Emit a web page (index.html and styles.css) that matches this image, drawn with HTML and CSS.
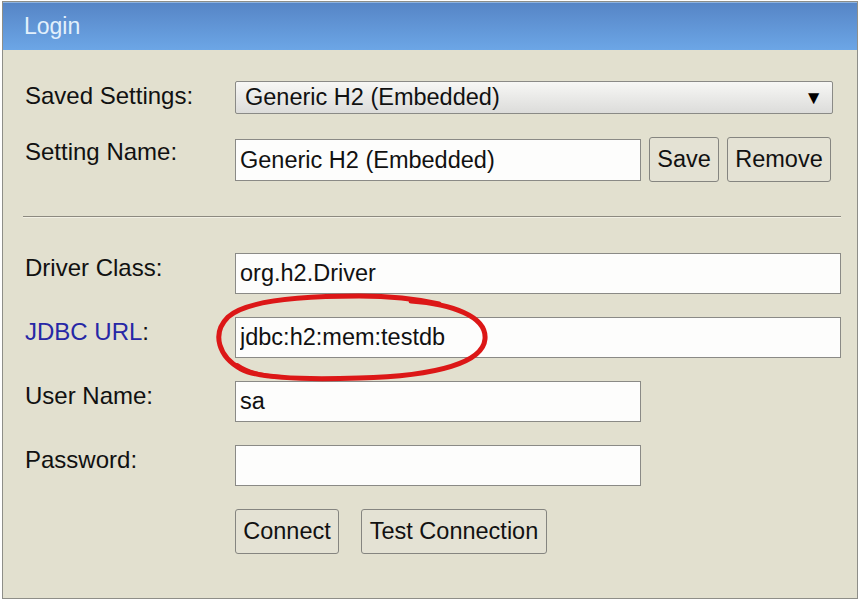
FILE: index.html
```html
<!DOCTYPE html>
<html lang="en">

<head>
    <meta charset="UTF-8">
    <title>Login</title>
    <link rel="stylesheet" href="styles.css">
</head>

<body>

    <div class="frame">
        <div class="title">Login</div>

        <div class="content">
            <div class="row">
                <div class="label">Saved Settings:</div>
                <div class="select">
                    <span>Generic H2 (Embedded)</span>
                    <span class="arrow">&#9660;</span>
                </div>
            </div>

            <div class="row">
                <div class="label">Setting Name:</div>
                <input class="field short name" type="text" value="Generic H2 (Embedded)">
                <button class="btn save">Save</button>
                <button class="btn remove">Remove</button>
            </div>

            <div class="line"></div>

            <div class="row">
                <div class="label">Driver Class:</div>
                <input class="field long" type="text" value="org.h2.Driver">
            </div>

            <div class="row url-row">
                <div class="label"><span class="link">JDBC URL</span>:</div>
                <input class="field long" type="text" value="jdbc:h2:mem:testdb">
                <!-- hand drawn circle over the url -->
                <svg class="mark" width="290" height="100" viewBox="210 290 290 100">
                    <path d="M412 301 C452 304 488 316 486 339 C484 362 440 376 360 378 C300 380 258 378 242 369 C220 357 212 334 229 317 C247 300 302 296 360 296 C392 296 414 298 440 304"
                          fill="none" stroke="#dc1717" stroke-width="5" stroke-linecap="round"/>
                    <path d="M238 365 C248 372 262 376 282 377" fill="none" stroke="#dc1717" stroke-width="4" stroke-linecap="round"/>
                </svg>
            </div>

            <div class="row">
                <div class="label">User Name:</div>
                <input class="field short" type="text" value="sa">
            </div>

            <div class="row">
                <div class="label">Password:</div>
                <input class="field short" type="password" value="">
            </div>

            <div class="row buttons">
                <div class="label"></div>
                <button class="btn">Connect</button>
                <button class="btn test">Test Connection</button>
            </div>
        </div>
    </div>

</body>

</html>
```

FILE: styles.css
```css
body {
    margin: 0;
    background-color: #fff;
    font-family: "Liberation Sans", Arial, sans-serif;
    font-size: 24px;
    color: #111;
}

.frame {
    margin: 1px 0 0 2px;
    width: 854px;
    height: 596px;
    border: 1px solid #8e8e88;
    background-color: #e2e0cf;
}

.title {
    height: 48px;
    line-height: 46px;
    padding-left: 21px;
    color: #e2f0fc;
    font-size: 23px;
    background: linear-gradient(#5685c6, #6ca6e6);
    border-top: 1px solid #8fb4e0;
    box-sizing: border-box;
}

.content {
    display: flex;
    flex-direction: column;
    gap: 23px;
    padding: 31px 16px 0 22px;
}

.row {
    display: flex;
    flex-direction: row;
    align-items: flex-start;
}

.label {
    width: 210px;
    flex: none;
    line-height: 28px;
    padding-top: 1px;
}

.link {
    color: #2727a6;
}

.select {
    width: 598px;
    height: 33px;
    box-sizing: border-box;
    border: 1px solid #8a8a86;
    border-radius: 2px;
    background: linear-gradient(#f7f7f5, #dcdcda);
    display: flex;
    align-items: center;
    justify-content: space-between;
    padding: 0 9px 0 9px;
    font-size: 23.5px;
}

.arrow {
    font-size: 19px;
    color: #000;
}

.field {
    box-sizing: border-box;
    height: 41px;
    border: 1px solid #8a8a86;
    border-radius: 0;
    background-color: #fdfdfc;
    font-family: "Liberation Sans", Arial, sans-serif;
    font-size: 23.5px;
    color: #111;
    padding: 0 4px;
    margin: 0;
}

.field.long {
    width: 606px;
}

.field.short {
    width: 406px;
}

.field.name {
    height: 42px;
    margin-top: 2px;
}

.btn {
    height: 45px;
    box-sizing: border-box;
    border: 1px solid #858580;
    border-radius: 3px;
    background-color: #e4e2d4;
    font-family: "Liberation Sans", Arial, sans-serif;
    font-size: 23.5px;
    color: #111;
    padding: 0 7px;
    margin: 0;
}

.save {
    width: 70px;
    margin-left: 8px;
}

.remove {
    width: 104px;
    margin-left: 8px;
}

.buttons .btn {
    width: 104px;
}

.buttons .test {
    width: 186px;
    margin-left: 22px;
}

.line {
    height: 1px;
    margin: 11px 0 12px -2px;
    background-color: #8c8a80;
    border-bottom: 1px solid #f2f0e4;
}

.url-row {
    position: relative;
}

.mark {
    position: absolute;
    left: 184px;
    top: -27px;
    pointer-events: none;
}
```
